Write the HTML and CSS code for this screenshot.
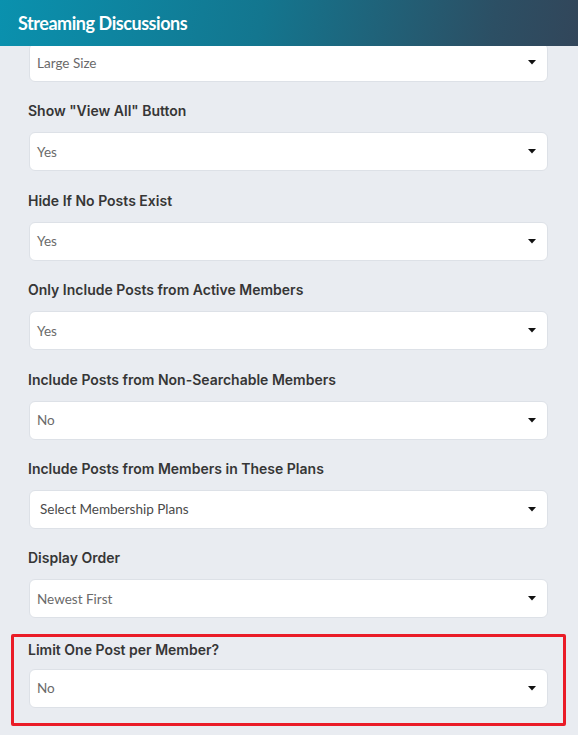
FILE: index.html
```html
<!DOCTYPE html>
<html>
<head>
<meta charset="utf-8">
<link rel="stylesheet" href="styles.css">
</head>
<body>
<div class="panel">
  <header class="panel-header">
    <h1 class="panel-title">Streaming Discussions</h1>
  </header>
  <div class="panel-body">
    <div class="panel-scroll">
      <div class="field field--first">
        <div class="select"><span class="select-value">Large Size</span><svg class="caret" width="8" height="5" viewBox="0 0 8 5"><path d="M0 0H8L4 4.5Z" fill="#111"/></svg></div>
      </div>
      <div class="field">
        <div class="field-label">Show "View All" Button</div>
        <div class="select"><span class="select-value">Yes</span><svg class="caret" width="8" height="5" viewBox="0 0 8 5"><path d="M0 0H8L4 4.5Z" fill="#111"/></svg></div>
      </div>
      <div class="field">
        <div class="field-label">Hide If No Posts Exist</div>
        <div class="select"><span class="select-value">Yes</span><svg class="caret" width="8" height="5" viewBox="0 0 8 5"><path d="M0 0H8L4 4.5Z" fill="#111"/></svg></div>
      </div>
      <div class="field">
        <div class="field-label">Only Include Posts from Active Members</div>
        <div class="select"><span class="select-value">Yes</span><svg class="caret" width="8" height="5" viewBox="0 0 8 5"><path d="M0 0H8L4 4.5Z" fill="#111"/></svg></div>
      </div>
      <div class="field">
        <div class="field-label">Include Posts from Non-Searchable Members</div>
        <div class="select"><span class="select-value">No</span><svg class="caret" width="8" height="5" viewBox="0 0 8 5"><path d="M0 0H8L4 4.5Z" fill="#111"/></svg></div>
      </div>
      <div class="field">
        <div class="field-label">Include Posts from Members in These Plans</div>
        <div class="select select--multi"><span class="select-value select-value--dark">Select Membership Plans</span><svg class="caret" width="8" height="5" viewBox="0 0 8 5"><path d="M0 0H8L4 4.5Z" fill="#111"/></svg></div>
      </div>
      <div class="field">
        <div class="field-label">Display Order</div>
        <div class="select"><span class="select-value">Newest First</span><svg class="caret" width="8" height="5" viewBox="0 0 8 5"><path d="M0 0H8L4 4.5Z" fill="#111"/></svg></div>
      </div>
      <div class="highlight">
        <div class="field field--boxed">
          <div class="field-label field-label--tight">Limit One Post per Member?</div>
          <div class="select"><span class="select-value">No</span><svg class="caret" width="8" height="5" viewBox="0 0 8 5"><path d="M0 0H8L4 4.5Z" fill="#111"/></svg></div>
        </div>
      </div>
    </div>
  </div>
</div>
</body>
</html>
```
FILE: styles.css
```css
html, body {
  margin: 0;
  padding: 0;
  background: #e9ecf1;
}

.panel {
  width: 578px;
  height: 735px;
  overflow: hidden;
  display: flex;
  flex-direction: column;
  font-family: "Lato", "Open Sans", sans-serif;
}

.panel-header {
  height: 46px;
  flex: none;
  background: linear-gradient(100deg, #0a91ae 0%, #13768f 45%, #2c4f64 85%, #32465a 100%);
  display: flex;
  align-items: center;
  padding-left: 18px;
  box-sizing: border-box;
}

.panel-title {
  margin: 0;
  color: #ffffff;
  font-size: 18px;
  font-weight: 700;
  letter-spacing: -0.45px;
}

.panel-body {
  flex: 1;
  overflow: hidden;
  background: #e9ecf1;
}

.panel-scroll {
  margin-top: -3px;
  padding: 0 30px 0 29px;
}

.field {
  display: flex;
  flex-direction: column;
  margin-top: 19.4px;
}

.field--first {
  margin-top: 0;
}

.field-label {
  font-family: "Inter", "Lato", sans-serif;
  font-size: 14px;
  line-height: 20px;
  font-weight: 600;
  color: #363636;
  margin: 0 0 11px -1px;
}

.field-label--tight {
  margin-bottom: 8.5px;
}

.select {
  height: 39px;
  box-sizing: border-box;
  background: #ffffff;
  border: 1px solid #dde1e7;
  border-radius: 6px;
  display: flex;
  align-items: center;
  justify-content: space-between;
  padding: 0 11px 0 7px;
}

.select--multi {
  padding-left: 10px;
}

.select-value {
  font-size: 13.5px;
  color: #6a6a6a;
}

.select-value--dark {
  color: #4a4a4a;
}

.caret {
  display: block;
}

.highlight {
  margin: 16px -18px 0 -18px;
  border: 3px solid #ea1c27;
  border-radius: 2px;
  padding: 3px 15px 15.5px 15px;
}

.field--boxed {
  margin-top: 0;
}
```
